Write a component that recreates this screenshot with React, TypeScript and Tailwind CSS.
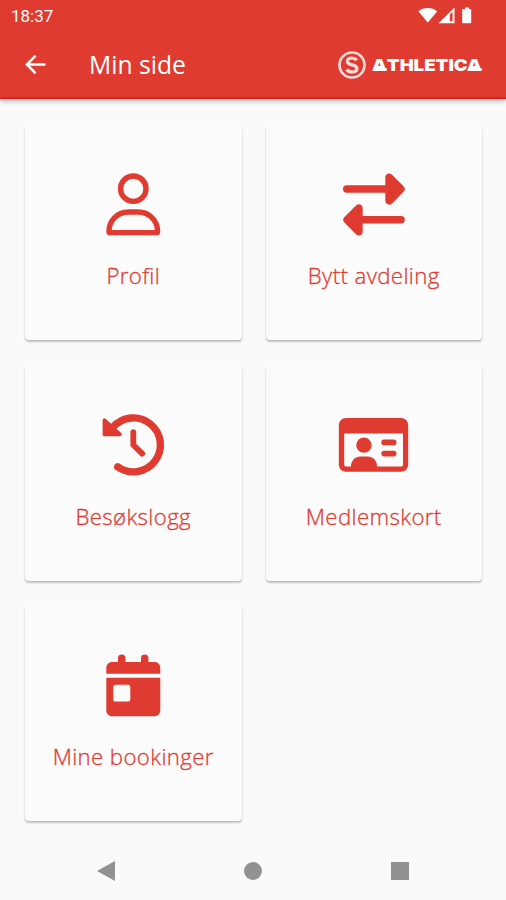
import React from "react";

const ProfileIcon = () => (
  <svg width="72" height="65" viewBox="0 0 72 65" fill="none" stroke="#e03b31" strokeWidth="5.4">
    <circle cx="36.3" cy="16.7" r="12.7" />
    <path
      d="M12 59.4C12 48.6 20.6 40 31.4 40h9.8C52 40 60.6 48.6 60.6 59.4c0 .7-.5 1.2-1.2 1.2H13.2c-.7 0-1.2-.5-1.2-1.2Z"
      strokeLinejoin="round"
    />
  </svg>
);

const SwapIcon = () => (
  <svg width="72" height="65" viewBox="0 0 72 65" fill="#e03b31">
    <path d="M8.7 13.3H47.3V5.5c0-3.8 4.2-5.3 6.7-2.8L65.8 14.5c1.4 1.4 1.4 3.6 0 5L54 31.4c-2.5 2.5-6.7 1-6.7-2.8v-7.9H8.7a3.7 3.7 0 0 1 0-7.4Z" />
    <path d="M63.1 44.1H24.7V36.3c0-3.8-4.2-5.3-6.7-2.8L6.2 45.3c-1.4 1.4-1.4 3.6 0 5L18 62.2c2.5 2.5 6.7 1 6.7-2.8v-7.9h38.4a3.7 3.7 0 0 0 0-7.4Z" />
  </svg>
);

const HistoryIcon = () => (
  <svg width="72" height="65" viewBox="0 0 72 65" fill="none" stroke="#e03b31" strokeLinecap="round" strokeLinejoin="round">
    <path d="M16 14.2A27 27 0 1 1 20.6 53.8" strokeWidth="7.3" />
    <path d="M36.3 19.2V32L45.2 40.6" strokeWidth="5.8" />
    <path d="M7.4 7.2v14.2h15.6Z" fill="#e03b31" strokeWidth="3.6" />
  </svg>
);

const MemberCardIcon = () => (
  <svg width="72" height="65" viewBox="0 0 72 65" fill="#e03b31">
    <rect x=".8" y="5" width="69.4" height="53.8" rx="7" />
    <path d="M6.2 20.4H65v31.4c0 .9-.7 1.6-1.6 1.6H7.8c-.9 0-1.6-.7-1.6-1.6Z" fill="#fbfbfb" />
    <circle cx="25.9" cy="32.1" r="7.7" />
    <path d="M13 54v-1.2c0-5.2 4.2-9.4 9.4-9.4h7.2c5.2 0 9.4 4.2 9.4 9.4V54Z" />
    <rect x="43.3" y="26.6" width="15.2" height="5.6" rx="2.8" />
    <rect x="43.3" y="37.8" width="15.2" height="5.6" rx="2.8" />
  </svg>
);

const CalendarIcon = () => (
  <svg width="72" height="65" viewBox="0 0 72 65" fill="#e03b31">
    <path d="M21 9V5.2a3.7 3.7 0 0 1 7.4 0V9H44V5.2a3.7 3.7 0 0 1 7.4 0V9h6.1c3.2 0 5.8 2.6 5.8 5.8v6H9.3v-6C9.3 11.6 11.9 9 15.1 9Z" />
    <path d="M9.3 24.8h54v32.6c0 3.2-2.6 5.8-5.8 5.8H15.1c-3.2 0-5.8-2.6-5.8-5.8Z" />
    <rect x="16.3" y="31.8" width="17" height="16.8" rx="2.2" fill="#fbfbfb" />
  </svg>
);

const items = [
  { label: "Profil", icon: <ProfileIcon /> },
  { label: "Bytt avdeling", icon: <SwapIcon /> },
  { label: "Besøkslogg", icon: <HistoryIcon /> },
  { label: "Medlemskort", icon: <MemberCardIcon /> },
  { label: "Mine bookinger", icon: <CalendarIcon /> },
];

const StatusBar = () => (
  <div className="flex h-8 items-center justify-between pl-[11px] pr-8">
    <span className="font-[Roboto,sans-serif] text-[17px] leading-none">18:37</span>
    <svg width="56" height="18" viewBox="0 0 56 18" fill="#fff">
      <path d="M.3 4.3C5.2-.2 14.4-.2 19.3 4.3L9.8 15.6Z" />
      <path d="M36.5.6V16.2H20.5Z" />
      <path d="M31.8 7.5 34.6 5v9.3h-2.8Z" fill="#e03b31" />
      <path d="M47 .5h4v1.6h1.2c.6 0 1 .4 1 1v12.2c0 .6-.4 1-1 1h-7c-.6 0-1-.4-1-1V3.1c0-.6.4-1 1-1H47Z" />
    </svg>
  </div>
);

// the A of the wordmark has a closed base
const LogoA = () => (
  <span className="relative after:absolute after:bottom-[4px] after:left-[0.5px] after:right-[0.5px] after:h-[2.5px] after:bg-white">
    A
  </span>
);

const Logo = () => (
  <div className="flex items-center gap-[6px]">
    <svg width="28" height="28" viewBox="0 0 28 28" fill="none" stroke="#fcdcd9">
      <circle cx="14" cy="14" r="12.5" strokeWidth="2.7" />
      <path
        d="M18.8 9.2C17.5 7.7 15.9 7 13.9 7c-2.7 0-4.5 1.4-4.5 3.4 0 4.8 9.5 2.2 9.5 7.1 0 2.2-2 3.5-4.8 3.5-2.3 0-4.2-.8-5.4-2.5"
        strokeWidth="3.2"
      />
    </svg>
    <div className="w-[111px]">
      <div className="inline-block origin-left scale-x-[1.13] whitespace-nowrap font-[Inter,sans-serif] text-[16.5px] font-black leading-5">
        <LogoA />
        THLETIC
        <LogoA />
      </div>
    </div>
  </div>
);

const App = () => {
  return (
    <div className="flex h-[900px] w-[506px] flex-col bg-[#fafafa] font-['Open_Sans',sans-serif]">
      <header className="h-[99px] border-b-2 border-[#d9231c] bg-[#e03b31] text-white shadow-[0_2px_5px_rgba(0,0,0,0.3)]">
        <StatusBar />
        <div className="flex h-[65px] items-center pl-[25px] pr-[23px]">
          <svg width="21" height="20" viewBox="0 0 21 20" fill="none" stroke="#fff" strokeWidth="2.5">
            <path d="M20.5 9.5H2.2M10.6.7 1.8 9.5l8.8 8.8" />
          </svg>
          <h1 className="ml-[43px] flex-1 pt-0.5 text-[24.7px] leading-none">Min side</h1>
          <Logo />
        </div>
      </header>

      <main className="grid flex-1 grid-cols-2 content-start gap-x-6 gap-y-[24.6px] pl-[25px] pr-6 pt-[25px]">
        {items.map((item) => (
          <button
            key={item.label}
            className="flex h-[216px] flex-col items-center rounded-[4px] bg-[#fbfbfb] pt-12 text-[#e03b31] shadow-[0_2px_2px_rgba(0,0,0,0.2),0_1px_2px_rgba(0,0,0,0.08)]"
          >
            {item.icon}
            <span className="mt-[23px] whitespace-nowrap text-[22.2px] font-light leading-[32px] tracking-[0.4px] [-webkit-text-stroke:0.3px_#e03b31]">
              {item.label}
            </span>
          </button>
        ))}
      </main>

      <nav className="flex h-[58px] items-center justify-between px-[97px]">
        <svg width="18" height="20" viewBox="0 0 18 20" fill="#929292">
          <path d="M0 10 18 0v20Z" />
        </svg>
        <div className="size-[18px] rounded-full bg-[#929292]" />
        <div className="size-[18px] bg-[#929292]" />
      </nav>
    </div>
  );
};

export default App;
